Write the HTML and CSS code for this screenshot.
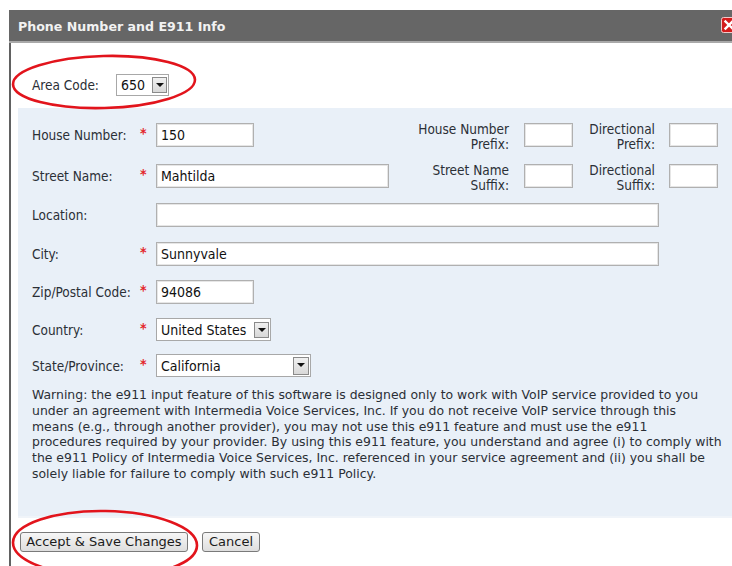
FILE: index.html
```html
<!DOCTYPE html>
<html lang="en">
<head>
<meta charset="utf-8">
<title>Phone Number and E911 Info</title>
<link rel="stylesheet" href="styles.css">
</head>
<body>
<div class="page">
  <div class="dialog">
    <div class="titlebar">
      <span class="title">Phone Number and E911 Info</span>
      <span class="close" aria-label="Close">
        <svg width="16" height="16" viewBox="0 0 16 16">
          <rect x="0.5" y="0.5" width="15" height="15" rx="2" fill="#d31c1c" stroke="#f3c9c9"/>
          <path d="M4.5 4.5 L11.5 11.5 M11.5 4.5 L4.5 11.5" stroke="#fff" stroke-width="2.4" stroke-linecap="square"/>
        </svg>
      </span>
    </div>

    <div class="body">
      <div class="area-row">
        <span class="area-label">Area Code:</span>
        <div class="select sel-area"><span class="val">650</span><span class="arrow"></span></div>
      </div>

      <div class="panel">
        <div class="row row-first">
          <span class="label">House Number:</span><span class="req">*</span>
          <div class="input w-short">150</div>
          <span class="side-label side-house">House Number<br>Prefix:</span>
          <div class="input w-tiny"></div>
          <span class="side-label side-2">Directional<br>Prefix:</span>
          <div class="input w-tiny"></div>
        </div>
        <div class="row row-second">
          <span class="label">Street Name:</span><span class="req">*</span>
          <div class="input w-street">Mahtilda</div>
          <span class="side-label side-street">Street Name<br>Suffix:</span>
          <div class="input w-tiny"></div>
          <span class="side-label side-2">Directional<br>Suffix:</span>
          <div class="input w-tiny"></div>
        </div>
        <div class="row">
          <span class="label">Location:</span><span class="req"></span>
          <div class="input w-long"></div>
        </div>
        <div class="row">
          <span class="label">City:</span><span class="req">*</span>
          <div class="input w-long">Sunnyvale</div>
        </div>
        <div class="row row-zip">
          <span class="label">Zip/Postal Code:</span><span class="req">*</span>
          <div class="input w-short">94086</div>
        </div>
        <div class="row row-country">
          <span class="label">Country:</span><span class="req">*</span>
          <div class="select sel-country"><span class="val">United States</span><span class="arrow"></span></div>
        </div>
        <div class="row row-state">
          <span class="label">State/Province:</span><span class="req">*</span>
          <div class="select sel-state"><span class="val">California</span><span class="arrow"></span></div>
        </div>

        <p class="warning">Warning: the e911 input feature of this software is designed only to work with VoIP service provided to you<br>under an agreement with Intermedia Voice Services, Inc. If you do not receive VoIP service through this<br>means (e.g., through another provider), you may not use this e911 feature and must use the e911<br>procedures required by your provider. By using this e911 feature, you understand and agree (i) to comply with<br>the e911 Policy of Intermedia Voice Services, Inc. referenced in your service agreement and (ii) you shall be<br>solely liable for failure to comply with such e911 Policy.</p>
      </div>

      <div class="actions">
        <button class="btn btn-save" type="button">Accept &amp; Save Changes</button>
        <button class="btn btn-cancel" type="button">Cancel</button>
      </div>
    </div>
  </div>

  <!-- hand-drawn red circles marking the area code and the save button -->
  <svg class="marks" width="732" height="566" viewBox="0 0 732 566">
    <ellipse cx="104" cy="82" rx="91" ry="26" fill="none" stroke="#e2141c" stroke-width="2.6" transform="rotate(-1.5 104 82)"/>
    <ellipse cx="105" cy="544" rx="92" ry="33" fill="none" stroke="#e2141c" stroke-width="2.6" transform="rotate(1 105 544)"/>
  </svg>
</div>
</body>
</html>
```

FILE: styles.css
```css
html, body {
  margin: 0;
  padding: 0;
  background: #fff;
  overflow: hidden;
}

.page {
  position: relative;
  width: 732px;
  height: 566px;
  overflow: hidden;
  padding-top: 10px;
  box-sizing: border-box;
  font-family: "DejaVu Sans Condensed", "DejaVu Sans", sans-serif;
  color: #2b2f36;
}

.dialog {
  margin-left: 9px;
  width: 736px;
  height: 560px;
  border-left: 2px solid #616161;
  box-sizing: border-box;
}

/* dark header strip with a light rule below it */
.titlebar {
  height: 29px;
  background: #666;
  border-bottom: 2px solid #a9a9a9;
  display: flex;
  align-items: center;
  justify-content: space-between;
  padding: 2px 8px 0 9px;
  margin-left: -2px;
}

.title {
  color: #f2f2f2;
  font-family: "DejaVu Sans", sans-serif;
  font-weight: bold;
  font-size: 12.6px;
}

.close {
  display: flex;
  margin-top: -3px;
}

.body {
  padding-top: 31px;
}

.area-row {
  display: flex;
  align-items: center;
  padding-left: 21px;
  height: 22px;
}

.area-label {
  font-size: 13.5px;
  width: 84px;
}

/* old-style dropdown: white field plus a small grey arrow button */
.select {
  display: flex;
  align-items: center;
  height: 22px;
  box-sizing: border-box;
  background: #fff;
  border: 1px solid #a8a8a8;
  font-size: 14px;
  color: #111;
}

.select .val {
  flex: 1;
  padding-left: 4px;
  white-space: nowrap;
}

.select .arrow {
  width: 15px;
  height: 16px;
  margin-right: 1px;
  box-sizing: border-box;
  border: 1px solid #8a8a8a;
  background: linear-gradient(#f0f0f0, #d8d8d8);
  position: relative;
}

.select .arrow::after {
  content: "";
  position: absolute;
  left: 3px;
  top: 5px;
  border-left: 4px solid transparent;
  border-right: 4px solid transparent;
  border-top: 4px solid #111;
}

.sel-area { width: 53px; }
.sel-country { width: 115px; height: 23px; }
.sel-state { width: 155px; height: 23px; }
.sel-state .arrow { height: 18px; width: 16px; }

.panel {
  margin: 12px 0 0 7px;
  background: #e9f0f8;
  border-bottom: 2px solid #f0f4f9;
  padding: 13px 0 34px 14px;
}

.row {
  display: flex;
  align-items: center;
  height: 24px;
  margin-top: 15px;
  font-size: 13.5px;
}

.row-first { margin-top: 2px; }
.row-second { margin-top: 17px; }
.row-zip { margin-top: 14px; }
.row-country { margin-top: 14px; height: 23px; }
.row-state { margin-top: 13px; height: 23px; }

.label {
  width: 106px;
  white-space: nowrap;
}

.req {
  width: 18px;
  color: #e3262a;
  font-weight: bold;
  font-size: 14px;
  position: relative;
  top: -2px;
  padding-left: 2px;
  box-sizing: border-box;
}

.input {
  height: 24px;
  box-sizing: border-box;
  border: 1px solid #b0b0b0;
  box-shadow: inset 0 0 0 1px #e6e6e6;
  background: #fff;
  padding: 3px 0 0 4px;
  font-size: 14px;
  color: #111;
}

.w-short { width: 98px; }
.w-tiny { width: 49px; }
.w-street { width: 233px; }
.w-long { width: 503px; }

.side-label {
  text-align: right;
  line-height: 15px;
  margin-right: 15px;
  white-space: nowrap;
  padding-top: 3px;
}

.side-house { width: 255px; }
.side-street { width: 120px; }
.side-2 { width: 82px; margin-right: 14px; }

.warning {
  margin: 10px 0 0 0;
  white-space: nowrap;
  font-family: "DejaVu Sans", sans-serif;
  font-size: 12.45px;
  line-height: 15.8px;
  color: #2b2f36;
}

.actions {
  display: flex;
  gap: 14px;
  margin: 14px 0 0 9px;
}

.btn {
  font-family: "DejaVu Sans", sans-serif;
  font-size: 13px;
  color: #1b1b1b;
  height: 20px;
  padding: 0 4px;
  border: 1px solid #7a7a7a;
  border-radius: 3px;
  background: linear-gradient(#f6f6f6, #dedede);
  line-height: 18px;
}

.btn-save { width: 168px; }
.btn-cancel { width: 58px; }

.marks {
  position: absolute;
  left: 0;
  top: 0;
  pointer-events: none;
}
```
